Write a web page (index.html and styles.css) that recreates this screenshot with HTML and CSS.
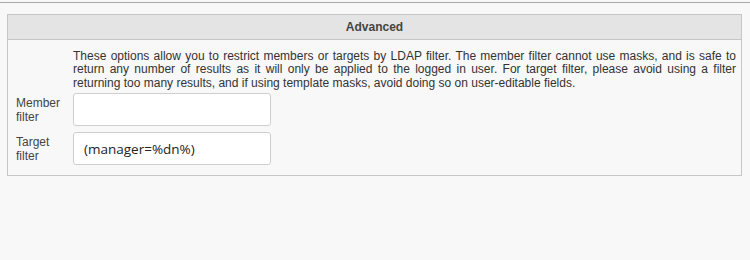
FILE: index.html
```html
<!DOCTYPE html>
<html lang="en">
<head>
    <meta charset="UTF-8">
    <meta name="viewport" content="width=device-width, initial-scale=1.0">
    <title>Advanced</title>
    <link rel="stylesheet" href="styles.css">
</head>
<body>
    <div class="topbar"></div>
    <div class="panel">
        <div class="panel-head">Advanced</div>
        <div class="panel-body">
            <div class="row">
                <div class="label"></div>
                <p class="desc">These options allow you to restrict members or targets by LDAP filter. The member filter cannot use masks, and is safe to return any number of results as it will only be applied to the logged in user. For target filter, please avoid using a filter returning too many results, and if using template masks, avoid doing so on user-editable fields.</p>
            </div>
            <div class="row field">
                <label class="label" for="member">Member filter</label>
                <input type="text" id="member" value="">
            </div>
            <div class="row field">
                <label class="label" for="target">Target filter</label>
                <input type="text" id="target" value="(manager=%dn%)">
            </div>
        </div>
    </div>
</body>
</html>
```

FILE: styles.css
```css
*{
    padding: 0;
    margin: 0;
    box-sizing: border-box;
}
body{
    background-color: #f8f8f8;
    font-family: "Liberation Sans", Arial, sans-serif;
    font-size: 12px;
    color: #333;
    padding-top: 2px;
}
.topbar{
    border-top: 1px solid #a9a9a9;
    margin-bottom: 11px;
}
.panel{
    margin: 0 8px 0 7px;
    border: 1px solid #c6c6c6;
}
.panel-head{
    height: 25px;
    line-height: 24px;
    background-color: #e4e4e4;
    border-bottom: 1px solid #c6c6c6;
    text-align: center;
    font-weight: bold;
    color: #444;
}
.panel-body{
    padding: 10px 5px 10px 8px;
}
.row{
    display: flex;
    gap: 7px;
}
.label{
    width: 50px;
    flex-shrink: 0;
    line-height: 14px;
    color: #444;
}
.desc{
    flex: 1;
    text-align: justify;
    line-height: 13.4px;
    margin-bottom: 3px;
}
.field{
    align-items: center;
    margin-bottom: 6px;
}
.field:last-child{
    margin-bottom: 0;
}
input{
    width: 198px;
    height: 33px;
    border: 1px solid #cfcfcf;
    border-radius: 3px;
    background-color: #fff;
    padding: 0 10px;
    font-family: "Open Sans", "Noto Sans", sans-serif;
    font-size: 13.5px;
    color: #222;
    outline: none;
}
```
